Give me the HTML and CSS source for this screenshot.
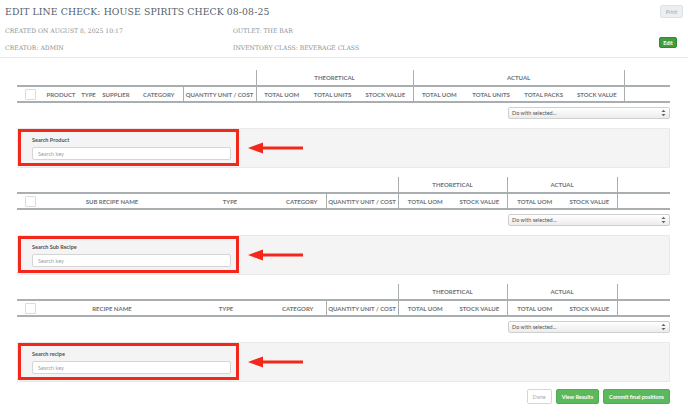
FILE: index.html
```html
<!DOCTYPE html>
<html lang="en">
<head>
<meta charset="utf-8">
<title>Edit Line Check</title>
<link rel="stylesheet" href="styles.css">
</head>
<body>
<div class="page-head">
	<div class="title-row">
		<h1 class="title">EDIT LINE CHECK: HOUSE SPIRITS CHECK 08-08-25</h1>
		<button class="btn btn-print" type="button">Print</button>
	</div>
	<div class="meta">
		<span>CREATED ON AUGUST 8, 2025 10:17</span>
		<span>OUTLET: THE BAR</span>
		<span></span>
		<span>CREATOR: ADMIN</span>
		<span>INVENTORY CLASS: BEVERAGE CLASS</span>
		<button class="btn btn-edit" type="button">Edit</button>
	</div>
</div>

<div class="content">
	<!-- products -->
	<table class="lc-table">
		<colgroup>
			<col style="width:25px"><col style="width:38px"><col style="width:17px"><col style="width:38px"><col style="width:48px">
			<col style="width:73px">
			<col style="width:51px"><col style="width:51px"><col style="width:55px">
			<col style="width:52px"><col style="width:52px"><col style="width:53px"><col style="width:54px">
			<col style="width:46px">
		</colgroup>
		<thead>
			<tr class="group-row">
				<th colspan="6"></th>
				<th colspan="3" class="grp">THEORETICAL</th>
				<th colspan="4" class="grp grp-last">ACTUAL</th>
				<th></th>
			</tr>
			<tr class="head-row">
				<th><span class="cb"></span></th>
				<th>PRODUCT</th>
				<th>TYPE</th>
				<th>SUPPLIER</th>
				<th>CATEGORY</th>
				<th class="sep">QUANTITY UNIT / COST</th>
				<th class="sep">TOTAL UOM</th>
				<th>TOTAL UNITS</th>
				<th>STOCK VALUE</th>
				<th class="sep">TOTAL UOM</th>
				<th>TOTAL UNITS</th>
				<th>TOTAL PACKS</th>
				<th>STOCK VALUE</th>
				<th class="sep"></th>
			</tr>
		</thead>
	</table>
	<div class="bulk-row">
		<div class="select"><span>Do with selected...</span><svg width="5" height="8" viewBox="0 0 5 8"><path d="M0.5 3 L2.5 0.8 L4.5 3 Z M0.5 5 L2.5 7.2 L4.5 5 Z" fill="#666"/></svg></div>
	</div>
	<div class="search-panel">
		<div class="search-field">
			<label for="searchProduct">Search Product</label>
			<input id="searchProduct" type="text" placeholder="Search key">
		</div>
		<svg class="arrow" width="56" height="14" viewBox="0 0 56 14"><path d="M0 7 L15 1.5 L15 12.5 Z" fill="#f4271b"/><rect x="14" y="5.5" width="41" height="3" fill="#f4271b"/></svg>
	</div>

	<!-- sub recipes -->
	<table class="lc-table">
		<colgroup>
			<col style="width:25px"><col style="width:140px"><col style="width:96px"><col style="width:48px">
			<col style="width:72px">
			<col style="width:54px"><col style="width:55px">
			<col style="width:55px"><col style="width:55px">
			<col style="width:53px">
		</colgroup>
		<thead>
			<tr class="group-row">
				<th colspan="5"></th>
				<th colspan="2" class="grp">THEORETICAL</th>
				<th colspan="2" class="grp grp-last">ACTUAL</th>
				<th></th>
			</tr>
			<tr class="head-row">
				<th><span class="cb"></span></th>
				<th>SUB RECIPE NAME</th>
				<th>TYPE</th>
				<th>CATEGORY</th>
				<th class="sep">QUANTITY UNIT / COST</th>
				<th class="sep">TOTAL UOM</th>
				<th>STOCK VALUE</th>
				<th class="sep">TOTAL UOM</th>
				<th>STOCK VALUE</th>
				<th class="sep"></th>
			</tr>
		</thead>
	</table>
	<div class="bulk-row">
		<div class="select"><span>Do with selected...</span><svg width="5" height="8" viewBox="0 0 5 8"><path d="M0.5 3 L2.5 0.8 L4.5 3 Z M0.5 5 L2.5 7.2 L4.5 5 Z" fill="#666"/></svg></div>
	</div>
	<div class="search-panel">
		<div class="search-field">
			<label for="searchSub">Search Sub Recipe</label>
			<input id="searchSub" type="text" placeholder="Search key">
		</div>
		<svg class="arrow" width="56" height="14" viewBox="0 0 56 14"><path d="M0 7 L15 1.5 L15 12.5 Z" fill="#f4271b"/><rect x="14" y="5.5" width="41" height="3" fill="#f4271b"/></svg>
	</div>

	<!-- recipes -->
	<table class="lc-table">
		<colgroup>
			<col style="width:25px"><col style="width:140px"><col style="width:88px"><col style="width:56px">
			<col style="width:72px">
			<col style="width:54px"><col style="width:55px">
			<col style="width:55px"><col style="width:55px">
			<col style="width:53px">
		</colgroup>
		<thead>
			<tr class="group-row">
				<th colspan="5"></th>
				<th colspan="2" class="grp">THEORETICAL</th>
				<th colspan="2" class="grp grp-last">ACTUAL</th>
				<th></th>
			</tr>
			<tr class="head-row">
				<th><span class="cb"></span></th>
				<th>RECIPE NAME</th>
				<th>TYPE</th>
				<th>CATEGORY</th>
				<th class="sep">QUANTITY UNIT / COST</th>
				<th class="sep">TOTAL UOM</th>
				<th>STOCK VALUE</th>
				<th class="sep">TOTAL UOM</th>
				<th>STOCK VALUE</th>
				<th class="sep"></th>
			</tr>
		</thead>
	</table>
	<div class="bulk-row">
		<div class="select"><span>Do with selected...</span><svg width="5" height="8" viewBox="0 0 5 8"><path d="M0.5 3 L2.5 0.8 L4.5 3 Z M0.5 5 L2.5 7.2 L4.5 5 Z" fill="#666"/></svg></div>
	</div>
	<div class="search-panel">
		<div class="search-field">
			<label for="searchRecipe">Search recipe</label>
			<input id="searchRecipe" type="text" placeholder="Search key">
		</div>
		<svg class="arrow" width="56" height="14" viewBox="0 0 56 14"><path d="M0 7 L15 1.5 L15 12.5 Z" fill="#f4271b"/><rect x="14" y="5.5" width="41" height="3" fill="#f4271b"/></svg>
	</div>

	<div class="actions">
		<button class="btn btn-done" type="button">Done</button>
		<button class="btn btn-green" type="button">View Results</button>
		<button class="btn btn-green" type="button">Commit final positions</button>
	</div>
</div>
</body>
</html>
```

FILE: styles.css
```css
html, body {
	margin: 0;
	padding: 0;
	background: #fff;
}

body {
	font-family: Lato, "Liberation Sans", sans-serif;
	color: #555;
}

.page-head {
	padding: 5px 5px 0 5px;
	border-bottom: 1px solid #e8e8e8;
	height: 52px;
}

.title-row {
	display: flex;
	justify-content: space-between;
	align-items: center;
	height: 13px;
}

.title {
	margin: 0;
	font-family: "DejaVu Serif", serif;
	font-weight: normal;
	font-size: 9.3px;
	color: #56616b;
	letter-spacing: 0.1px;
}

.meta {
	display: grid;
	grid-template-columns: 228px 1fr auto;
	grid-auto-rows: 17px;
	align-items: center;
	margin-top: 4px;
	font-family: "DejaVu Serif", serif;
	font-size: 6.1px;
	color: #8a8f93;
}

.btn {
	font-family: Lato, "Liberation Sans", sans-serif;
	border-radius: 2px;
	padding: 0;
	cursor: pointer;
}

.btn-print {
	width: 23px;
	height: 13px;
	font-size: 5.5px;
	color: #a4a9ad;
	background: #eceef0;
	border: 1px solid #dfe2e4;
}

.btn-edit {
	align-self: start;
	margin-top: -2px;
	margin-right: 6px;
	width: 18px;
	height: 11px;
	font-size: 5.5px;
	font-weight: bold;
	color: #fff;
	background: #3f9e3f;
	border: 1px solid #2f8a2f;
}

.content {
	padding: 0 18px 0 17px;
}

.lc-table {
	width: 653px;
	table-layout: fixed;
	border-collapse: collapse;
	margin-top: 9px;
}

.lc-table:first-child {
	margin-top: 12px;
}

.lc-table th {
	padding: 0;
	font-size: 6px;
	font-weight: bold;
	color: #6e7377;
	text-align: center;
	white-space: nowrap;
	overflow: hidden;
}

.group-row th {
	height: 15px;
}

.group-row .grp {
	border-left: 1px solid #a9aeb1;
}

.group-row .grp-last {
	border-right: 1px solid #a9aeb1;
}

.head-row th {
	height: 14px;
	border-top: 2px solid #a9aeb1;
	border-bottom: 2px solid #a9aeb1;
}

.head-row .sep {
	border-left: 1px solid #a9aeb1;
}

.cb {
	display: block;
	width: 9px;
	height: 9px;
	margin-left: 8px;
	border: 1px solid #dcdcdc;
	border-radius: 1px;
	background: #fff;
}

.bulk-row {
	display: flex;
	justify-content: flex-end;
	margin-top: 4px;
}

.select {
	display: flex;
	justify-content: space-between;
	align-items: center;
	box-sizing: border-box;
	width: 162px;
	height: 12px;
	padding: 0 3px 0 3px;
	font-size: 5.5px;
	color: #555;
	border: 1px solid #cfcfcf;
	border-radius: 2px;
	background: linear-gradient(#fff, #ececec);
}

.search-panel {
	display: flex;
	align-items: center;
	margin-top: 9px;
	height: 38px;
	background: #f4f4f4;
	border: 1px solid #e9e9e9;
	border-radius: 1px;
}

.search-field {
	box-sizing: border-box;
	align-self: flex-start;
	width: 221px;
	height: 37px;
	padding: 5px 5px 0 11px;
	border: 3px solid #f4271b;
}

.search-field label {
	display: block;
	font-size: 5.5px;
	font-weight: bold;
	color: #555;
	line-height: 7px;
	margin-bottom: 3px;
}

.search-field input {
	display: block;
	box-sizing: border-box;
	width: 199px;
	height: 13px;
	padding: 0 0 0 5px;
	font-family: Lato, "Liberation Sans", sans-serif;
	font-size: 5.5px;
	border: 1px solid #d5d5d5;
	border-radius: 2px;
	background: #fff;
	outline: none;
}

.search-field input::placeholder {
	color: #a0a0a0;
}

.arrow {
	margin-left: 9px;
	margin-top: -1px;
}

.actions {
	display: flex;
	justify-content: flex-end;
	gap: 4px;
	margin-top: 7px;
}

.btn-done {
	width: 25px;
	height: 15px;
	font-size: 5.5px;
	color: #aaa;
	background: #fff;
	border: 1px solid #d6d6d6;
}

.btn-green {
	height: 15px;
	padding: 0 5px;
	font-size: 5.5px;
	font-weight: bold;
	color: #fff;
	background: #5cb85c;
	border: 1px solid #52ad52;
}
```
